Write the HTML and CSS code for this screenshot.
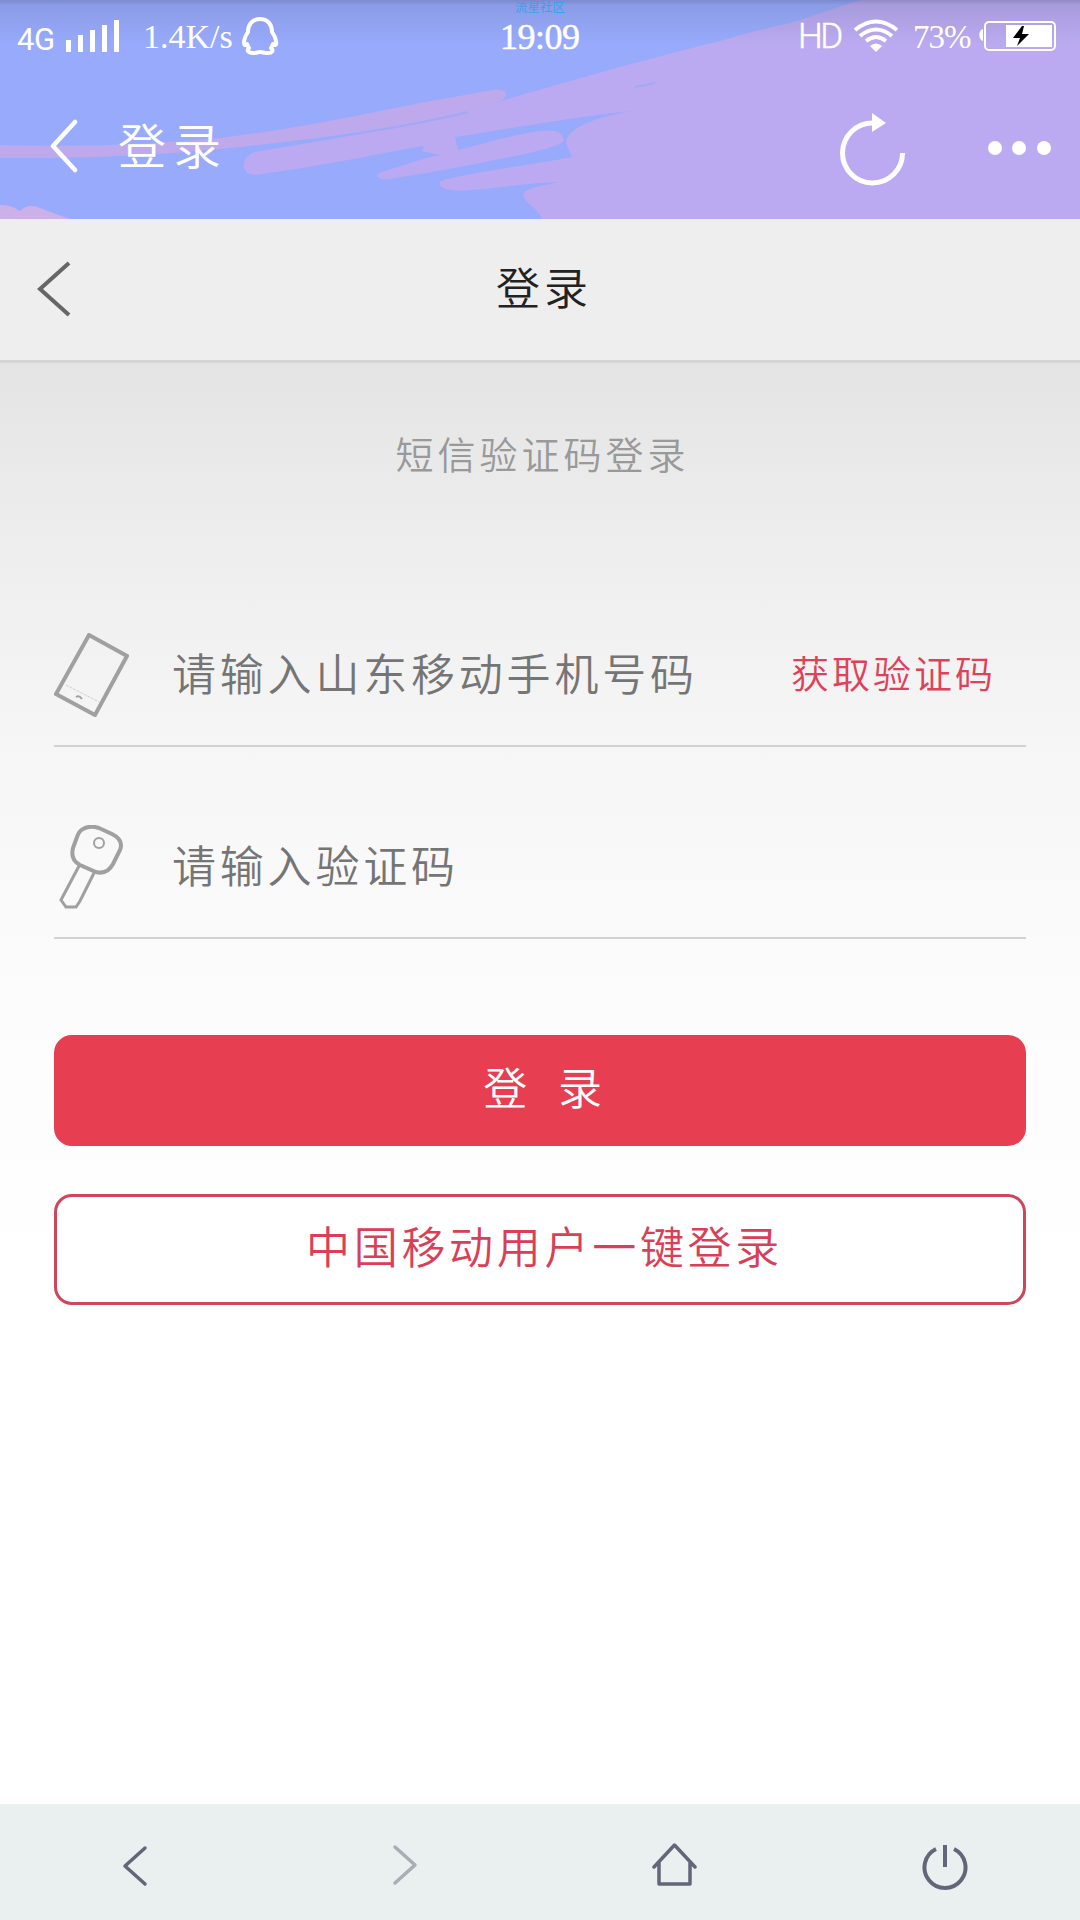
FILE: index.html
```
<!DOCTYPE html>
<html lang="zh-CN">
<head>
    <meta charset="UTF-8">
    <meta name="viewport" content="width=device-width, initial-scale=1.0">
    <title>登录</title>
    <link rel="stylesheet" href="styles.css">
</head>
<body>
    <div class="page">
        <!-- Status bar and app bar -->
        <header class="top">
            <svg class="wallpaper" viewBox="0 0 1080 219">
                <path fill="#bda9ec" d="M0 145Q120 148 220 138C300 128 360 115 420 103L493 90C506 88 511 95 500 101C470 112 420 123 360 132C320 138 270 144 220 149Q120 159 0 158z"/>
                <path fill="#bbaaf1" d="M255 152C320 141 400 128 440 118C510 99 610 68 720 41C770 26 782 26 800 20L860 0H1080V219H542C538 207 520 201 524 193C527 187 550 185 558 182C525 183 500 188 472 190C448 192 436 188 441 181C460 174 530 165 572 157L566 143C566 130 590 118 632 111C570 117 510 129 455 137L458 150C480 145 510 135 540 131C557 129 565 133 563 142C550 150 510 157 480 163C450 169 410 176 388 179C374 180 374 173 385 171C405 165 420 159 440 155L422 151L424 146C390 151 330 165 255 175C238 174 242 155 255 152z"/>
                <path fill="none" stroke="#a3a8f5" stroke-width="2" d="M360 133Q425 123 468 112M635 87l20-4"/>
                <path fill="#ccb1e9" d="M0 205q10-1 20 6q8-8 20-3q15 6 30 11H0z"/>
            </svg>
            <span class="watermark">流星社区</span>
            <div class="status-bar">
                <div class="status-left">
                    <span class="network">4G</span>
                    <svg class="signal" width="54" height="34" viewBox="0 0 54 34" fill="#fff">
                        <path d="M0 21h5v12H0zM12 16h5v17h-5zM24 11h5v22h-5zM36 6h5v27h-5zM48 1h5v32h-5z"/>
                    </svg>
                    <span class="speed">1.4K/s</span>
                    <svg width="38" height="40" viewBox="0 0 38 40" fill="none" stroke="#fff" stroke-width="4" stroke-linejoin="round">
                        <path d="M19 3C11 3 7 9 7 16C5 19 3 22 3 27C3 29 4 30 6 28C7 30 7 31 8 32C5 35 8 37 12 37C15 37 17 36 19 36C21 36 24 37 27 37C31 37 33 35 30 32C31 31 31 30 32 28C34 30 36 29 35 26C35 22 33 19 31 16C31 9 27 3 19 3z"/>
                    </svg>
                </div>
                <span class="clock">19:09</span>
                <div class="status-right">
                    <span class="hd">HD</span>
                    <svg class="wifi" width="46" height="34" viewBox="0 0 46 34" fill="none" stroke="#fff" stroke-width="4">
                        <path d="M2 11Q23-6 44 11M7 17Q23 4 39 17M13 22Q23 14 33 22"/>
                        <path fill="#fff" stroke="none" d="M17 27Q23 22 29 27L23 33z"/>
                    </svg>
                    <span class="percent">73%</span>
                    <svg width="78" height="32" viewBox="0 0 78 32">
                        <path fill="#fff" d="M4 9v12C-1 20-1 10 4 9zM27 5h46v22H27z"/>
                        <rect x="6" y="2" width="70" height="28" rx="4" fill="none" stroke="#fff" stroke-width="2"/>
                        <path d="M43 6L34 18h7l-3 8 12-12h-7l2-8z"/>
                    </svg>
                </div>
            </div>
            <div class="app-bar">
                <svg width="28" height="54" viewBox="0 0 28 54" fill="none" stroke="#fff" stroke-width="4.5" stroke-linecap="round" stroke-linejoin="round">
                    <path d="M25 3L3 27l22 24"/>
                </svg>
                <span class="app-title">登录</span>
                <svg class="refresh" width="66" height="74" viewBox="0 0 66 74">
                    <path d="M33 11A30 30 0 1 0 62.500 41" fill="none" stroke="#fff" stroke-width="5"/>
                    <path d="M32 1l14 10-14 9z" fill="#fff"/>
                </svg>
                <svg class="more" width="64" height="14" viewBox="0 0 64 14" fill="#fff">
                    <circle cx="7" cy="7" r="7"/><circle cx="31" cy="7" r="7"/><circle cx="56" cy="7" r="7"/>
                </svg>
            </div>
        </header>

        <div class="nav">
            <svg width="34" height="56" viewBox="0 0 34 56" fill="none" stroke="#666" stroke-width="4">
                <path d="M32 2L3 28l29 26"/>
            </svg>
            <h1>登录</h1>
        </div>

        <!-- Login form -->
        <main class="login">
            <h2>短信验证码登录</h2>
            <div class="field">
                <svg width="75" height="84" viewBox="0 0 75 84" fill="none" stroke="#a0a0a0" stroke-width="4">
                    <path d="M35 2L73 23 41 82 2 61z"/>
                    <path d="M12 52l33 17" stroke="#d0d0d0" stroke-width="1" stroke-dasharray="3 1"/>
                    <path d="M22 64q3-2 6 2" stroke-width="2"/>
                </svg>
                <input type="text" placeholder="请输入山东移动手机号码">
                <a class="get-code">获取验证码</a>
            </div>
            <div class="field">
                <svg width="75" height="84" viewBox="0 0 75 84" fill="none" stroke="#a0a0a0" stroke-width="4">
                    <path d="M29 4Q36 0 45 3L58 9Q70 15 66 25L59 39Q53 50 42 47L26 40Q16 35 19 23L23 12Q25 6 29 4z"/>
                    <circle cx="45" cy="18" r="5" stroke-width="2"/>
                    <path d="M25 41L7 75l5 7h10l4-6 14-28" stroke-width="3"/>
                </svg>
                <input type="text" placeholder="请输入验证码">
            </div>
            <button class="btn btn-login">登&nbsp;&nbsp;录</button>
            <button class="btn btn-quick">中国移动用户一键登录</button>
        </main>

        <!-- Browser toolbar -->
        <footer class="toolbar">
            <svg width="46" height="50" viewBox="0 0 46 50" fill="none" stroke="#626678" stroke-width="3.500" stroke-linecap="round" stroke-linejoin="round">
                <path d="M33 7L13 25l20 18"/>
            </svg>
            <svg width="46" height="50" viewBox="0 0 46 50" fill="none" stroke="#a9adb5" stroke-width="3.500" stroke-linecap="round" stroke-linejoin="round">
                <path d="M13 6L33 24 13 42"/>
            </svg>
            <svg width="46" height="50" viewBox="0 0 46 50" fill="none" stroke="#626678" stroke-width="3.500" stroke-linecap="round" stroke-linejoin="round">
                <path d="M2 26L22.500 4 43 26M7 22v21h31V22"/>
            </svg>
            <svg width="46" height="50" viewBox="0 0 46 50" fill="none" stroke="#626678" stroke-width="4">
                <path d="M14 8A20.500 20.500 0 1 0 32 8M23 4v22"/>
            </svg>
        </footer>
    </div>
</body>
</html>
```
FILE: styles.css
```
* {
    box-sizing: border-box;
}

body {
    margin: 0;
    font-family: "Noto Sans CJK SC", sans-serif;
    font-weight: 350;
    background-color: #fff;
}

svg {
    display: block;
    flex-shrink: 0;
}

.page {
    display: flex;
    flex-direction: column;
    width: 1080px;
    height: 1920px;
    overflow: hidden;
}

.top {
    position: relative;
    height: 219px;
    color: #fff;
    background-color: #98aafc;
}

/* painted strokes behind both bars, darker at the screen edge */
.wallpaper {
    position: absolute;
    top: 0;
    left: 0;
    width: 1080px;
    height: 219px;
}

.top::before {
    content: "";
    position: absolute;
    z-index: 1;
    top: 0;
    left: 0;
    width: 100%;
    height: 45px;
    background: linear-gradient(rgba(80, 90, 130, 0.4), rgba(80, 90, 130, 0.18) 5px, rgba(80, 90, 130, 0));
}

.watermark {
    position: absolute;
    z-index: 1;
    top: 0;
    left: 0;
    width: 100%;
    font-size: 12.5px;
    font-weight: 400;
    line-height: 13px;
    text-align: center;
    color: #409fe8;
}

.status-bar {
    position: relative;
    z-index: 2;
    display: grid;
    grid-template-columns: 1fr 84px 1fr;
    align-items: center;
    height: 72px;
    padding: 0 23px 0 17px;
    font-family: "Liberation Serif", serif;
    font-weight: 400;
    font-size: 34px;
    white-space: nowrap;
}

.status-left, .status-right {
    display: flex;
    align-items: center;
}

.status-right {
    justify-content: flex-end;
}

.network {
    width: 49px;
    padding-top: 6px;
    font-family: Roboto, sans-serif;
    font-size: 31px;
    letter-spacing: -0.5px;
}

.signal {
    margin-right: 23px;
}

.speed {
    width: 98px;
    padding-top: 2px;
}

.clock {
    padding: 2px 0 0 5px;
    font-size: 36px;
    letter-spacing: -0.5px;
    text-align: center;
    -webkit-text-stroke: 0.5px #fff;
}

.hd {
    width: 55px;
    font-family: Roboto, sans-serif;
    font-size: 35px;
    font-weight: 300;
    letter-spacing: -2.5px;
    -webkit-text-stroke: 0.5px #fff;
}

.wifi {
    margin-right: 14px;
}

.percent {
    width: 66px;
    padding-top: 2px;
    font-size: 33px;
    letter-spacing: -1px;
}

.app-bar {
    position: relative;
    display: flex;
    align-items: center;
    height: 147px;
    padding: 0 28px 0 50px;
}

.app-title {
    flex: 1;
    padding: 0 0 5px 40px;
    font-size: 48px;
    letter-spacing: 7px;
}

.app-bar .refresh {
    margin: 6px 82px 0 0;
}

.app-bar .more {
    margin-top: 4px;
}

.nav {
    display: grid;
    grid-template-columns: 34px 1fr 34px;
    align-items: center;
    height: 144px;
    padding: 0 37px;
    background-color: #eee;
    border-bottom: 3px solid #d5d5d5;
}

.nav svg {
    margin-bottom: 2px;
}

.nav h1 {
    margin: 0;
    padding: 0 0 7px 8px;
    font-size: 44px;
    font-weight: 350;
    letter-spacing: 4px;
    text-align: center;
    color: #222;
}

.login {
    flex: 1;
    padding: 0 54px;
    background: linear-gradient(#e4e4e4, #ebebeb 130px, #f1f1f1 260px, #f6f6f6 390px, #fbfbfb 590px, #fefefe 830px, #fff 950px);
}

.login h2 {
    height: 192px;
    margin: 0;
    padding: 60px 0 0 5px;
    font-size: 38px;
    font-weight: 350;
    line-height: 60px;
    letter-spacing: 4px;
    text-align: center;
    color: #999;
}

.field {
    display: flex;
    align-items: center;
    height: 192px;
    padding-top: 50px;
    border-bottom: 2px solid #d2d2d2;
}

.field input {
    flex: 1;
    min-width: 0;
    padding: 0;
    margin: 0 0 6px 43px;
    font: inherit;
    font-size: 44px;
    letter-spacing: 3.800px;
    border: none;
    outline: none;
    background: none;
}

.field input::placeholder {
    color: #757575;
}

.get-code {
    width: 235px;
    margin-bottom: 7px;
    font-size: 38px;
    letter-spacing: 3px;
    color: #df4158;
}

.btn {
    display: block;
    width: 100%;
    height: 111px;
    padding: 0 0 9px 9px;
    font: inherit;
    font-size: 44px;
    letter-spacing: 3.700px;
    border: 3px solid #e83e51;
    border-radius: 18px;
}

.btn-login {
    margin-top: 96px;
    color: #fff;
    background-color: #e83e51;
}

.btn-quick {
    margin-top: 48px;
    color: #d94057;
    background-color: #fff;
    border-color: #cf465b;
}

.toolbar {
    display: grid;
    grid-template-columns: repeat(4, 1fr);
    justify-items: center;
    align-items: center;
    height: 116px;
    padding-top: 8px;
    background-color: #eaf0f0;
}
```
